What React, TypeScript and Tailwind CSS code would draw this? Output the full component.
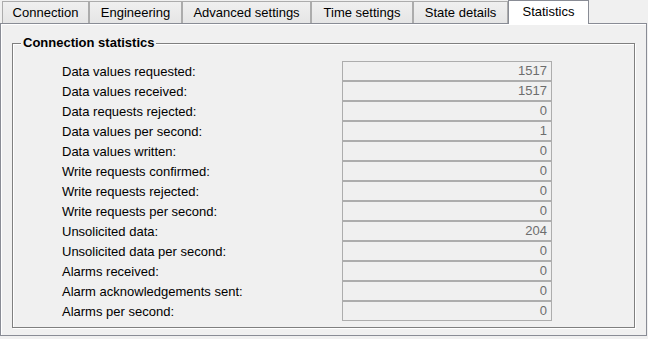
import React from 'react';

const tabs = [
  { label: 'Connection', w: 'w-[87px]' },
  { label: 'Engineering', w: 'w-[93px]' },
  { label: 'Advanced settings', w: 'w-[129px]' },
  { label: 'Time settings', w: 'w-[102px]' },
  { label: 'State details', w: 'w-[95px]' },
];

const stats: [string, number][] = [
  ['Data values requested:', 1517],
  ['Data values received:', 1517],
  ['Data requests rejected:', 0],
  ['Data values per second:', 1],
  ['Data values written:', 0],
  ['Write requests confirmed:', 0],
  ['Write requests rejected:', 0],
  ['Write requests per second:', 0],
  ['Unsolicited data:', 204],
  ['Unsolicited data per second:', 0],
  ['Alarms received:', 0],
  ['Alarm acknowledgements sent:', 0],
  ['Alarms per second:', 0],
];

export default function App() {
  return (
    <div className="w-[648px] h-[339px] bg-[#f0f0f0] overflow-hidden font-['Liberation_Sans',Arial,sans-serif] text-[13px] text-black">
      {/* tab strip */}
      <div className="flex items-end h-[24px] pl-[2px] -mb-[1px] relative z-10">
        {tabs.map((t) => (
          <div
            key={t.label}
            className={`${t.w} h-[22px] mb-[1px] border border-b-0 border-[#acacac] bg-gradient-to-b from-[#f0f0f0] to-[#e5e5e5] flex items-center justify-center leading-none`}
          >
            {t.label}
          </div>
        ))}
        <div className="w-[81px] h-[24px] border border-b-0 border-[#898c95] bg-white flex items-center justify-center leading-none pb-[3px]">
          Statistics
        </div>
      </div>

      {/* tab panel */}
      <div className="w-[647px] h-[313px] border border-[#898c95] shadow-[inset_1px_1px_0_#ffffff] pl-[11px] pt-[19px]">
        {/* group box */}
        <div className="relative w-[623px] h-[285px] border border-[#7f7f7f] shadow-[1px_1px_0_#ffffff,inset_1px_1px_0_#ffffff] pl-[49px] pt-[17px]">
          <span className="absolute left-[8px] -top-[9px] px-[2px] bg-[#f0f0f0] font-bold leading-[16px]">
            Connection statistics
          </span>
          <div className="flex flex-col">
            {stats.map(([label, value]) => (
              <div key={label} className="flex items-center h-[20px]">
                <div className="w-[280px] leading-none">{label}</div>
                <div className="w-[210px] h-[20px] border border-[#adadad] bg-[#f0f0f0] text-[#6d6d6d] text-right pr-[4px] leading-[18px]">
                  {value}
                </div>
              </div>
            ))}
          </div>
        </div>
      </div>
    </div>
  );
}
